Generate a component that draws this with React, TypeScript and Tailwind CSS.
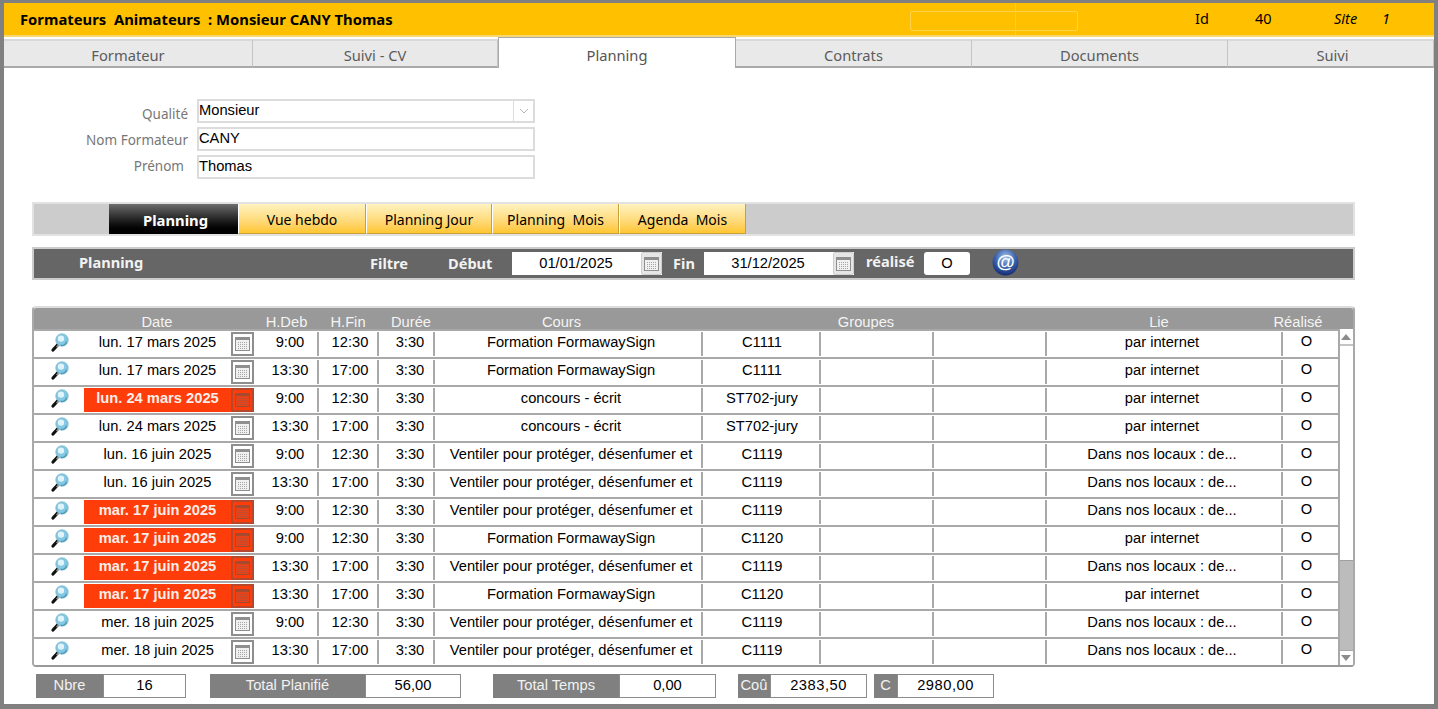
const tahoma = "font-['Noto_Sans','DejaVu_Sans',sans-serif]";

const topTabs = [
  { label: "Formateur", w: "w-[249px]", pad: "" },
  { label: "Suivi - CV", w: "w-[245px]", pad: "" },
  { label: "Planning", w: "w-[238px]", active: true, pad: "" },
  { label: "Contrats", w: "w-[236px]", pad: "" },
  { label: "Documents", w: "w-[256px]", pad: "" },
  { label: "Suivi", w: "w-[206px]", pad: "pl-[4px]" },
];

const subTabs = [
  { label: "Vue hebdo", w: "w-[128px]" },
  { label: "Planning Jour", w: "w-[126px]" },
  { label: "Planning  Mois", w: "w-[127px]" },
  { label: "Agenda  Mois", w: "w-[127px]" },
];

const F = "Ventiler pour protéger, désenfumer et";
const P = "Formation FormawaySign";
const C = "concours - écrit";
const I = "par internet";
const L = "Dans nos locaux : de...";

const rows = [
  ["lun. 17 mars 2025", "9:00", "12:30", P, "C1111", I, false],
  ["lun. 17 mars 2025", "13:30", "17:00", P, "C1111", I, false],
  ["lun. 24 mars 2025", "9:00", "12:30", C, "ST702-jury", I, true],
  ["lun. 24 mars 2025", "13:30", "17:00", C, "ST702-jury", I, false],
  ["lun. 16 juin 2025", "9:00", "12:30", F, "C1119", L, false],
  ["lun. 16 juin 2025", "13:30", "17:00", F, "C1119", L, false],
  ["mar. 17 juin 2025", "9:00", "12:30", F, "C1119", L, true],
  ["mar. 17 juin 2025", "9:00", "12:30", P, "C1120", I, true],
  ["mar. 17 juin 2025", "13:30", "17:00", F, "C1119", L, true],
  ["mar. 17 juin 2025", "13:30", "17:00", P, "C1120", I, true],
  ["mer. 18 juin 2025", "9:00", "12:30", F, "C1119", L, false],
  ["mer. 18 juin 2025", "13:30", "17:00", F, "C1119", L, false],
] as const;

function CalendarIcon({ alert = false }: { alert?: boolean }) {
  const line = alert ? "#c04a28" : "#a6a6a6";
  const head = alert ? "#a5492f" : "#8f8f8f";
  const fill = alert ? "#e8421a" : "#f1f1f1";
  return (
    <svg width="15" height="14" viewBox="0 0 15 14">
      <rect x="0.5" y="0.5" width="14" height="13" fill={fill} stroke={head} />
      <rect x="1" y="1" width="13" height="2" fill={head} />
      {[5.5, 7.5, 9.5, 11.5].map((y) =>
        [3.5, 5.5, 7.5, 9.5, 11.5].map((x) => (
          <rect key={`${x}-${y}`} x={x - 0.5} y={y - 0.5} width="1" height="1" fill={line} />
        )),
      )}
    </svg>
  );
}

function Loupe() {
  return (
    <svg width="20" height="20" viewBox="0 0 20 20">
      <path d="M8.5 11 L3 17" stroke="#111111" strokeWidth="3.2" strokeLinecap="round" />
      <path d="M9 11.5 L6.5 14" stroke="#9a9a9a" strokeWidth="1.2" />
      <circle cx="12" cy="7" r="6.2" fill="#82c8e2" stroke="#7fb4c8" strokeWidth="0.8" />
      <circle cx="11" cy="5.6" r="3.2" fill="#dff3fa" />
      <path d="M16.6 8.6 A5.4 5.4 0 0 1 10.8 12.4" stroke="#4d97b8" strokeWidth="1.3" fill="none" />
    </svg>
  );
}

function DateField({ value }: { value: string }) {
  return (
    <div className="flex h-[23px] w-[150px] bg-white">
      <div className="flex-1 pr-[1px] text-center font-['Liberation_Sans',sans-serif] text-[14.7px] font-normal leading-[22px] text-black">{value}</div>
      <div className="flex w-[21px] items-center justify-center rounded-[2px] border border-[#d0d0d0] bg-[#e6e6e6]">
        <CalendarIcon />
      </div>
    </div>
  );
}

function FormRow({ label, value, pr, select }: { label: string; value: string; pr: string; select?: boolean }) {
  return (
    <div className="flex h-[24px] items-center">
      <div className={`${pr} w-[193px] text-right text-[13.5px] text-[#777777] ${tahoma}`}>{label}</div>
      <div className="flex h-[24px] w-[338px] border-2 border-[#dcdcdc] bg-white text-[14.7px] leading-[18px] text-black">
        <div className="flex-1 pl-0">{value}</div>
        {select && (
          <div className="flex w-[20px] items-center justify-center border-l border-[#dcdcdc]">
            <svg width="10" height="6" viewBox="0 0 10 6">
              <path d="M1 1 L5 5 L9 1" stroke="#b5b5b5" fill="none" />
            </svg>
          </div>
        )}
      </div>
    </div>
  );
}

function Total({ label, value, lw, vw, ml, wide }: { label: string; value: string; lw: string; vw: string; ml: string; wide?: boolean }) {
  return (
    <div className={`flex h-[24px] overflow-hidden ${ml}`}>
      <div className={`${lw} h-[24px] bg-[#808080] text-center text-[14.7px] leading-[22px] text-[#f2f2f2]`}>{label}</div>
      <div className={`${vw} h-[24px] border border-[#8c8c8c] text-center text-[14.7px] leading-[21px] text-black ${wide ? "tracking-[0.5px]" : ""}`}>{value}</div>
    </div>
  );
}

const cell = "flex h-[24px] items-center justify-center border-r-2 border-[#a9a9a9] overflow-hidden whitespace-nowrap pb-[4px]";

export default function App() {
  return (
    <div className="h-[709px] w-[1438px] overflow-hidden bg-[#808080] pt-[3px] pr-[4px] pb-[5px] pl-[4px] font-['Liberation_Sans',Arial,sans-serif]">
      <div className="h-[701px] overflow-hidden bg-white">
        {/* Title bar */}
        <div className={`relative flex h-[34px] items-center border-b-2 border-[#f6d772] bg-[#ffc000] text-black ${tahoma}`}>
          <div className="w-[1175px] pl-[16px] text-[14.8px] font-bold leading-[28px]">Formateurs&nbsp; Animateurs&nbsp; : Monsieur CANY Thomas</div>
          <div className="w-[68px] pl-[16px] text-[14.5px]">Id</div>
          <div className="w-[86px] pl-[8px] text-[14.5px]">40</div>
          <div className="w-[49px] pl-[1px] text-[14.5px] italic">Site</div>
          <div className="text-[14.5px] italic">1</div>
          <div className="absolute top-[8px] left-[906px] h-[20px] w-[168px] rounded-[2px] border border-[#ffd24d]" />
          <div className="absolute top-0 left-[1011px] h-[32px] w-px bg-[#ffca33]" />
        </div>

        {/* Top tabs */}
        <div className={`flex h-[31px] items-end text-[14.7px] ${tahoma}`}>
          {topTabs.map((t) =>
            t.active ? (
              <div key={t.label} className={`${t.w} h-[31px] border-x border-t border-[#a9a9a9] bg-white text-center leading-[35px] text-[#555555]`}>
                {t.label}
              </div>
            ) : (
              <div key={t.label} className={`${t.w} ${t.pad} h-[29px] border-r border-b-2 border-r-[#c4c4c4] border-b-[#a9a9a9] border-t-2 border-t-[#d9d9d9] bg-[#e9e9e9] text-center leading-[29px] text-[#5c5c5c]`}>
                {t.label}
              </div>
            ),
          )}
        </div>

        {/* Identity form */}
        <div className="mt-[31px] flex flex-col gap-[4px]">
          <FormRow label="Qualité" value="Monsieur" pr="pr-[9px] pt-[6px]" select />
          <FormRow label="Nom Formateur" value="CANY" pr="pr-[9px] pt-[2px]" />
          <FormRow label="Prénom" value="Thomas" pr="pr-[13px] pb-[2px]" />
        </div>

        {/* Sub navigation */}
        <div className={`mt-[23px] ml-[28px] flex h-[34px] w-[1323px] border-2 border-[#e2e2e2] bg-[#cccccc] text-[14px] ${tahoma}`}>
          <div className="ml-[75px] h-[30px] w-[129px] bg-gradient-to-b from-[#6e6e6e] to-[#000000] pl-[4px] text-center text-[14.8px] font-bold leading-[32px] text-white">Planning</div>
          {subTabs.map((t) => (
            <div key={t.label} className={`${t.w} h-[30px] whitespace-pre border-r border-b border-r-[#c9a03a] border-b-[#c9a03a] border-l border-l-white bg-gradient-to-b from-[#fff3bf] to-[#ffc62b] text-center leading-[32px] text-black`}>
              {t.label}
            </div>
          ))}
        </div>

        {/* Filter bar */}
        <div className={`mt-[11px] ml-[28px] flex h-[33px] w-[1323px] items-center border-2 border-[#cccccc] bg-[#666666] text-[14.6px] font-bold text-[#f2f2f2] ${tahoma}`}>
          <div className="w-[336px] pl-[45px] pb-[1px]">Planning</div>
          <div className="w-[78px]">Filtre</div>
          <div className="w-[64px]">Début</div>
          <DateField value="01/01/2025" />
          <div className="w-[42px] pl-[11px]">Fin</div>
          <DateField value="31/12/2025" />
          <div className="w-[58px] pb-[3px] pl-[12px] whitespace-nowrap">réalisé</div>
          <div className="ml-[12px] h-[23px] w-[46px] rounded-[3px] bg-white text-center font-['Liberation_Sans',sans-serif] text-[14.7px] font-normal leading-[23px] text-black">O</div>
          <svg className="mb-[3px] ml-[22px]" width="27" height="27" viewBox="0 0 26 26">
            <defs>
              <radialGradient id="at" cx="50%" cy="30%" r="70%">
                <stop offset="0%" stopColor="#a9c4ea" />
                <stop offset="55%" stopColor="#3a64ae" />
                <stop offset="100%" stopColor="#142c70" />
              </radialGradient>
            </defs>
            <circle cx="13" cy="13" r="12.5" fill="url(#at)" />
            <text x="13" y="18.5" textAnchor="middle" fontSize="18" fontWeight="700" fontFamily="Liberation Sans" fill="#ffffff">@</text>
          </svg>
        </div>

        {/* Table */}
        <div className="mt-[26px] ml-[28px] w-[1323px] overflow-hidden rounded-[4px] border-x-2 border-b-2 border-t-2 border-[#c4c4c4] border-b-[#9a9a9a] border-x-[#a9a9a9] border-t-[#dddddd]">
          <div className="flex h-[21px] bg-[#999999] text-center text-[14.7px] leading-[29px] text-[#f4f4f4]">
            <div className="w-[220px] pl-[26px]">Date</div>
            <div className="w-[63px] pl-[2px]">H.Deb</div>
            <div className="w-[62px]">H.Fin</div>
            <div className="w-[64px]">Durée</div>
            <div className="w-[237px]">Cours</div>
            <div className="w-[372px]">Groupes</div>
            <div className="w-[214px]">Lie</div>
            <div className="w-[64px]">Réalisé</div>
          </div>
          <div className="flex">
            <div className="w-[1304px] bg-white text-[14.7px] text-black">
              {rows.map((r, i) => (
                <div key={i} className="flex h-[28px] items-center border-t-2 border-[#a9a9a9]">
                  <div className="flex w-[50px] items-center justify-center pb-[2px] pl-[2px]"><Loupe /></div>
                  <div className={`flex h-[24px] w-[147px] items-center justify-center overflow-hidden whitespace-nowrap pb-[3px] ${r[6] ? "bg-[#ff3d0a] font-bold text-[#fbeee8]" : ""}`}>
                    {r[0]}
                  </div>
                  <div className={`flex h-[24px] w-[23px] items-center justify-center border-2 ${r[6] ? "border-[#b5482c] bg-[#ff3d0a]" : "border-[#8e8e8e] bg-white"}`}>
                    <CalendarIcon alert={!!r[6]} />
                  </div>
                  <div className={`${cell} w-[65px] pl-[9px]`}>{r[1]}</div>
                  <div className={`${cell} w-[60px] pl-[4px]`}>{r[2]}</div>
                  <div className={`${cell} w-[56px] pl-[8px]`}>3:30</div>
                  <div className={`${cell} w-[268px] pl-[6px]`}>{r[3]}</div>
                  <div className={`${cell} w-[118px] pl-[2px]`}>{r[4]}</div>
                  <div className={`${cell} w-[113px]`}></div>
                  <div className={`${cell} w-[113px]`}></div>
                  <div className={`${cell} w-[236px] pr-[4px]`}>{r[5]}</div>
                  <div className="flex h-[24px] w-[55px] items-start justify-center pr-[8px] leading-[18px]">O</div>
                </div>
              ))}
            </div>
            <div className="flex w-[15px] flex-col border-l-2 border-[#a9a9a9] bg-white">
              <div className="flex h-[17px] items-center justify-center border-b-2 border-[#c4c4c4] pr-[2px]">
                <svg width="10" height="6" viewBox="0 0 10 6"><path d="M5 0 L10 6 L0 6 Z" fill="#8c8c8c" /></svg>
              </div>
              <div className="h-[214px]" />
              <div className="flex-1 border-t border-[#a0a0a0] bg-[#bcbcbc]" />
              <div className="flex h-[15px] items-center justify-center border-t border-[#a9a9a9] bg-white pr-[2px]">
                <svg width="10" height="6" viewBox="0 0 10 6"><path d="M0 0 L10 0 L5 6 Z" fill="#8c8c8c" /></svg>
              </div>
            </div>
          </div>
        </div>

        {/* Totals */}
        <div className="mt-[7px] ml-[32px] flex">
          <Total label="Nbre" value="16" lw="w-[67px]" vw="w-[83px]" ml="" />
          <Total label="Total Planifié" value="56,00" lw="w-[155px]" vw="w-[96px]" ml="ml-[24px]" />
          <Total label="Total Temps" value="0,00" lw="w-[126px]" vw="w-[97px]" ml="ml-[32px]" />
          <Total label="Coû" value="2383,50" lw="w-[32px]" vw="w-[97px]" ml="ml-[22px]" wide />
          <Total label="C" value="2980,00" lw="w-[23px]" vw="w-[97px]" ml="ml-[7px]" wide />
        </div>
      </div>
    </div>
  );
}
